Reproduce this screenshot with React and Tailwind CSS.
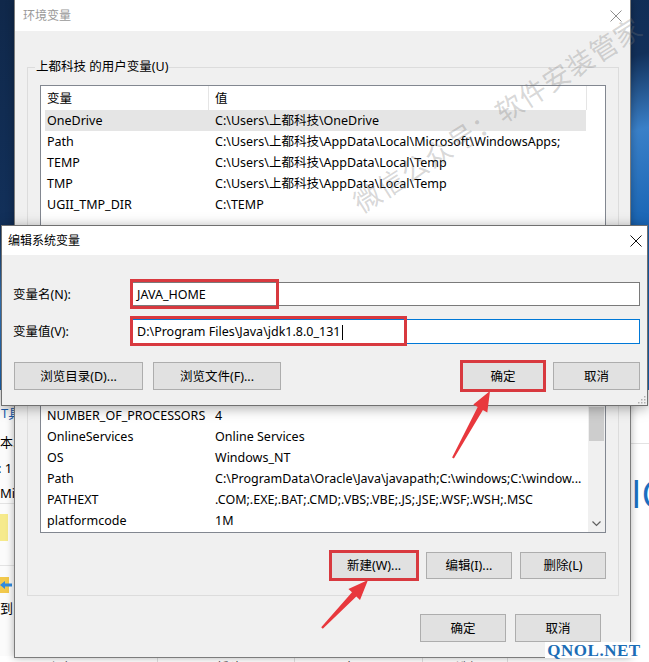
import React from "react";

const FONT = "font-['Noto_Sans','Noto_Sans_CJK_SC',sans-serif]";

const userRows = [
  ["OneDrive", String.raw`C:\Users\上都科技\OneDrive`, true],
  ["Path", String.raw`C:\Users\上都科技\AppData\Local\Microsoft\WindowsApps;`],
  ["TEMP", String.raw`C:\Users\上都科技\AppData\Local\Temp`],
  ["TMP", String.raw`C:\Users\上都科技\AppData\Local\Temp`],
  ["UGII_TMP_DIR", String.raw`C:\TEMP`],
];

// first three rows are scrolled/covered by the edit dialog
const sysRows = [
  ["", ""],
  ["", ""],
  ["", ""],
  ["NUMBER_OF_PROCESSORS", "4"],
  ["OnlineServices", "Online Services"],
  ["OS", "Windows_NT"],
  ["Path", String.raw`C:\ProgramData\Oracle\Java\javapath;C:\windows;C:\window...`],
  ["PATHEXT", ".COM;.EXE;.BAT;.CMD;.VBS;.VBE;.JS;.JSE;.WSF;.WSH;.MSC"],
  ["platformcode", "1M"],
];

function Row({ name, value, selected }) {
  return (
    <div
      className={
        selected
          ? "flex h-[21px] pt-[2px] shrink-0 items-center ml-[4px] w-[541px] bg-[#e5e5e5]"
          : "flex h-[21px] pt-[2px] shrink-0 items-center ml-[4px] w-[541px]"
      }
    >
      <div className="w-[163px] pl-[2px] whitespace-nowrap overflow-hidden">{name}</div>
      <div className="flex-1 pl-[7px] whitespace-nowrap overflow-hidden">{value}</div>
    </div>
  );
}

function Header({ a = "变量", b = "值" }) {
  return (
    <div className="flex h-[24px] w-[546px] shrink-0">
      <div className="w-[168px] pl-[6px] pt-[2px] border-r border-[#e5e5e5] flex items-center">{a}</div>
      <div className="flex-1 pl-[6px] pt-[2px] border-r border-[#e5e5e5] flex items-center">{b}</div>
    </div>
  );
}

function Btn({ children, w = "w-[86px]", h = "h-[27px]", extra = "" }) {
  return (
    <div
      className={`${w} ${h} ${extra} flex items-center justify-center pt-[2px] bg-[#e1e1e1] border border-[#adadad] text-[12.5px] text-black shrink-0`}
    >
      {children}
    </div>
  );
}

function CloseX({ color = "#000", size = 12 }) {
  return (
    <svg width={size} height={size} viewBox="0 0 12 12">
      <path d="M0.5 0.5 L11.5 11.5 M11.5 0.5 L0.5 11.5" stroke={color} strokeWidth="1" fill="none" />
    </svg>
  );
}

export default function App() {
  return (
    <div
      className={`${FONT} relative w-[649px] h-[662px] overflow-hidden text-[12.5px] text-black bg-[linear-gradient(165deg,#10284a_0%,#12305a_27%,#3a80c8_36%,#1864b4_48%,#1c6cc0_100%)]`}
    >
      {/* Explorer window behind */}
      <div className="absolute left-0 top-[390px] w-[649px] h-[280px] bg-white flex flex-col">
        <div className="flex h-[266px]">
          <div className="w-[14px] flex flex-col overflow-hidden text-[13px] bg-[#fbfbfb]">
            <div className="mt-[13px] h-[20px] leading-[20px] whitespace-nowrap text-[#1f5fb0] pl-[1px]">T具</div>
            <div className="mt-[9px] h-[20px] leading-[20px] whitespace-nowrap">本.</div>
            <div className="mt-[6px] h-[20px] leading-[20px] whitespace-nowrap -ml-[2px]">: 1</div>
            <div className="mt-[5px] h-[21px] leading-[20px] whitespace-nowrap border-b border-[#e3e3e3]">Mi</div>
            <div className="mt-[10px] h-[27px] w-[8px] bg-[#f6ea8c]"></div>
            <div className="mt-[24px] border-t border-[#e3e3e3]"></div>
            <div className="mt-[11px] h-[16px]">
              <svg width="14" height="16" viewBox="0 0 14 16">
                <rect x="0" y="0" width="9" height="16" fill="#f2c94c" />
                <path d="M0 8 L5 4 L5 6.5 L12 6.5 L12 9.5 L5 9.5 L5 12 Z" fill="#2f8be0" />
              </svg>
            </div>
            <div className="mt-[5px] h-[20px] leading-[20px] whitespace-nowrap">到</div>
          </div>
          <div className="flex-1"></div>
          <div className="w-[18px] flex flex-col overflow-hidden">
            <div className="mt-[53px] border-t border-[#e3e3e3]"></div>
            <div className="mt-[30px] text-[38px] leading-[38px] text-[#1b6fc0] whitespace-nowrap font-['Open_Sans',sans-serif]">IC</div>
          </div>
        </div>
        <div className="flex h-[14px] text-[13px] leading-[16px] text-[#333]">
          <div className="w-[157px] pl-[50px] pt-[3px]">组织</div>
          <div className="w-[137px] pl-[58px] pt-[3px] border-l border-[#e0e0e0]">新建</div>
          <div className="w-[128px] pl-[51px] pt-[3px] border-l border-[#e0e0e0]">打开</div>
          <div className="w-[85px] pl-[33px] pt-[3px] border-l border-[#e0e0e0]">选择</div>
          <div className="flex-1 border-l border-[#e0e0e0]"></div>
        </div>
      </div>

      {/* Main dialog 环境变量 */}
      <div className="absolute left-[14px] top-0 w-[617px] h-[658px] border-x border-b border-[#7c7c7c] bg-[#f0f0f0] flex flex-col shadow-[0_0_8px_rgba(0,0,0,0.3)]">
        <div className="h-[31px] bg-white flex items-center justify-between pl-[8px] pr-[8px] shrink-0">
          <span className="text-[#999999] text-[12px]">环境变量</span>
          <CloseX color="#8f8f8f" size={12} />
        </div>
        <div className="flex-1 flex flex-col pt-[28px]">
          {/* User variables */}
          <fieldset className="ml-[12px] mr-[11px] border border-[#dcdcdc] px-[12px] pt-[10px] pb-[14px]">
            <legend className="-ml-[5px] px-[1px] leading-[16px]">上都科技 的用户变量(U)</legend>
            <div className="h-[147px] border border-[#828790] bg-white overflow-hidden flex flex-col">
              <Header />
              {userRows.map((r) => (
                <Row key={r[0]} name={r[0]} value={r[1]} selected={r[2]} />
              ))}
            </div>
            {/* button row covered by the edit dialog */}
            <div className="flex justify-end mt-[12px]">
              <Btn></Btn>
              <Btn extra="ml-[9px]"></Btn>
              <Btn extra="ml-[8px]"></Btn>
            </div>
          </fieldset>

          {/* System variables (top part covered by the edit dialog) */}
          <fieldset className="mt-[5px] ml-[12px] mr-[11px] border border-[#dcdcdc] px-[12px] pt-[10px] pb-[16px]">
            <legend className="-ml-[5px] px-[1px] h-[16px] w-[80px]"></legend>
            <div className="h-[216px] border border-[#828790] bg-white overflow-hidden flex">
              <div className="flex-1 flex flex-col overflow-hidden">
                <Header a="" b="" />
                {sysRows.map((r, i) => (
                  <Row key={i} name={r[0]} value={r[1]} />
                ))}
              </div>
              <div className="w-[17px] bg-[#f0f0f0] flex flex-col">
                <div className="h-[17px] shrink-0"></div>
                <div className="h-[72px] shrink-0"></div>
                <div className="h-[34px] mx-[1px] bg-[#cdcdcd] shrink-0"></div>
                <div className="flex-1"></div>
                <div className="h-[17px] shrink-0 flex items-center justify-center">
                  <svg width="9" height="6" viewBox="0 0 9 6">
                    <path d="M0.5 0.5 L4.5 4.5 L8.5 0.5" stroke="#606060" strokeWidth="1.2" fill="none" />
                  </svg>
                </div>
              </div>
            </div>
            <div className="flex justify-end mt-[19px]">
              <Btn extra="outline-solid outline-[3px] outline-offset-[-1px] outline-[#d8393f]">新建(W)...</Btn>
              <Btn extra="ml-[9px]">编辑(I)...</Btn>
              <Btn extra="ml-[8px]">删除(L)</Btn>
            </div>
          </fieldset>

          <div className="flex justify-end mt-[18px] mr-[29px]">
            <Btn h="h-[28px]">确定</Btn>
            <Btn h="h-[28px]" extra="ml-[9px]">取消</Btn>
          </div>
        </div>
      </div>

      {/* Watermark */}
      <div className="absolute left-[497px] top-[114px] -translate-x-1/2 -translate-y-1/2 rotate-[-32.5deg] whitespace-nowrap text-[27px] tracking-[1px] leading-none text-[rgba(120,120,120,0.3)] font-['Noto_Sans_CJK_SC',sans-serif] pointer-events-none">
        微信公众号：软件安装管家
      </div>

      {/* Edit dialog 编辑系统变量 */}
      <div className="absolute left-[1px] top-[225px] w-[647px] h-[181px] border border-[#707070] bg-[#f0f0f0] flex flex-col shadow-[0_2px_12px_rgba(0,0,0,0.35)]">
        <div className="h-[29px] bg-white flex items-center justify-between pl-[6px] pr-[5px] shrink-0">
          <span className="text-[12px]">编辑系统变量</span>
          <CloseX color="#111" size={12} />
        </div>
        <div className="flex-1 flex flex-col pt-[27px] pl-[11px] pr-[7px] relative">
          <div className="flex items-center h-[24px]">
            <div className="w-[119px] shrink-0 pt-[2px]">变量名(N):</div>
            <div className="relative flex-1 h-[24px] border border-[#7a7a7a] bg-white pl-[4px] pt-[2px] flex items-center">
              <span>JAVA_HOME</span>
              <div className="absolute left-[-3px] top-[-4px] w-[149px] h-[30px] border-[3px] border-[#d8393f]"></div>
            </div>
          </div>
          <div className="flex items-center h-[25px] mt-[13px]">
            <div className="w-[119px] shrink-0 pt-[2px]">变量值(V):</div>
            <div className="relative flex-1 h-[25px] border border-[#0078d7] bg-white pl-[4px] pt-[2px] flex items-center">
              <span className="whitespace-nowrap">{String.raw`D:\Program Files\Java\jdk1.8.0_131`}</span>
              <span className="w-[1px] h-[15px] bg-black ml-[1px]"></span>
              <div className="absolute left-[-3px] top-[-4px] w-[277px] h-[30px] border-[3px] border-[#d8393f]"></div>
            </div>
          </div>
          <div className="flex mt-[18px]">
            <Btn w="w-[129px]" h="h-[28px]" extra="ml-[1px]">浏览目录(D)...</Btn>
            <Btn w="w-[128px]" h="h-[28px]" extra="ml-[10px]">浏览文件(F)...</Btn>
            <Btn w="w-[82px]" h="h-[28px]" extra="ml-auto outline-solid outline-[3px] outline-offset-[-1px] outline-[#d8393f]">确定</Btn>
            <Btn w="w-[87px]" h="h-[28px]" extra="ml-[9px]">取消</Btn>
          </div>
          <div className="absolute right-[1px] bottom-[1px]">
            <svg width="8" height="8" viewBox="0 0 8 8">
              <g fill="#b0b0b0">
                <rect x="6" y="0" width="1.5" height="1.5" />
                <rect x="3" y="3" width="1.5" height="1.5" />
                <rect x="6" y="3" width="1.5" height="1.5" />
                <rect x="0" y="6" width="1.5" height="1.5" />
                <rect x="3" y="6" width="1.5" height="1.5" />
                <rect x="6" y="6" width="1.5" height="1.5" />
              </g>
            </svg>
          </div>
        </div>
      </div>

      {/* Red arrows */}
      <svg className="absolute left-0 top-0 pointer-events-none" width="649" height="662" viewBox="0 0 649 662">
        <polygon
          fill="#e8383d"
          points="453.9,458.5 482.9,410.0 487.3,412.4 490,391 473.3,404.6 477.7,407.1 452.1,457.5"
        />
        <polygon
          fill="#e8383d"
          points="322.8,628.8 356.3,596.5 360.0,599.9 368,580 348.4,588.9 352.0,592.3 321.2,627.2"
        />
      </svg>

      {/* QNOL.NET */}
      <div className="absolute left-[545px] top-[642px] w-[98px] h-[16px] bg-white flex items-center justify-center font-['Liberation_Serif',serif] font-bold text-[17px] leading-none tracking-[0.5px] text-[#1c6db6]">
        QNOL.NET
      </div>
    </div>
  );
}
